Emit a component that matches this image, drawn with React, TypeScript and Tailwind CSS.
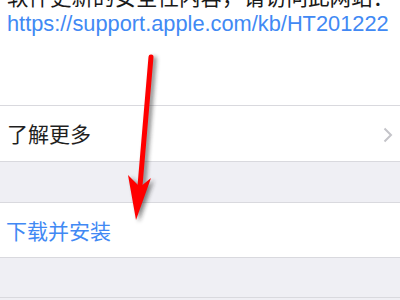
import React from "react";

export default function App() {
  const font = { fontFamily: '"Liberation Sans", "Noto Sans CJK SC", sans-serif' };
  return (
    <div className="relative w-[400px] h-[300px] overflow-hidden bg-[#efeff4] flex flex-col" style={font}>
      <div className="bg-white h-[105px] shrink-0 flex flex-col pl-[7px] pr-[6px] overflow-hidden">
        <div className="-mt-[14px] text-[21.5px] leading-[25px] text-[#1a1a1a] whitespace-nowrap">
          软件更新的安全性内容，请访问此网站：
        </div>
        <div className="text-[21.8px] leading-[25px] text-[#4189f4] whitespace-nowrap">
          https://support.apple.com/kb/HT201222
        </div>
      </div>
      <div className="shrink-0 border-t border-b border-[#d9d9de] bg-white h-[57px] flex items-center justify-between pl-[7px] pr-[7px] pt-[3px]">
        <span className="text-[21px] text-[#1f1f1f]">了解更多</span>
        <svg width="10" height="16" viewBox="0 0 10 16">
          <path d="M1.5 1.5 L8 8 L1.5 14.5" fill="none" stroke="#c4c4c9" strokeWidth="2" />
        </svg>
      </div>
      <div className="shrink-0 h-[40px]" />
      <div className="shrink-0 border-t border-b border-[#d9d9de] bg-white h-[56px] flex items-center pl-[6px] pt-[3px]">
        <span className="text-[21px] text-[#4189f4]">下载并安装</span>
      </div>
      <div className="shrink-0 h-[40px] border-b border-[#d9d9de]" />
      <svg className="absolute left-0 top-0" width="400" height="300" viewBox="0 0 400 300">
        <defs>
          <filter id="sh" x="-50%" y="-50%" width="200%" height="200%">
            <feGaussianBlur stdDeviation="2" />
          </filter>
        </defs>
        <g transform="translate(3,2)" opacity="0.55" filter="url(#sh)">
          <path d="M151 57 L140 186" stroke="#222" strokeWidth="5" strokeLinecap="round" />
          <path d="M128 175 L136 220 L151 178 L140 187 Z" fill="#222" />
        </g>
        <path d="M151 57 L140 186" stroke="#ff0000" strokeWidth="5" strokeLinecap="round" />
        <path d="M128 175 L136 220 L151 178 L140 187 Z" fill="#ff0000" />
      </svg>
    </div>
  );
}
